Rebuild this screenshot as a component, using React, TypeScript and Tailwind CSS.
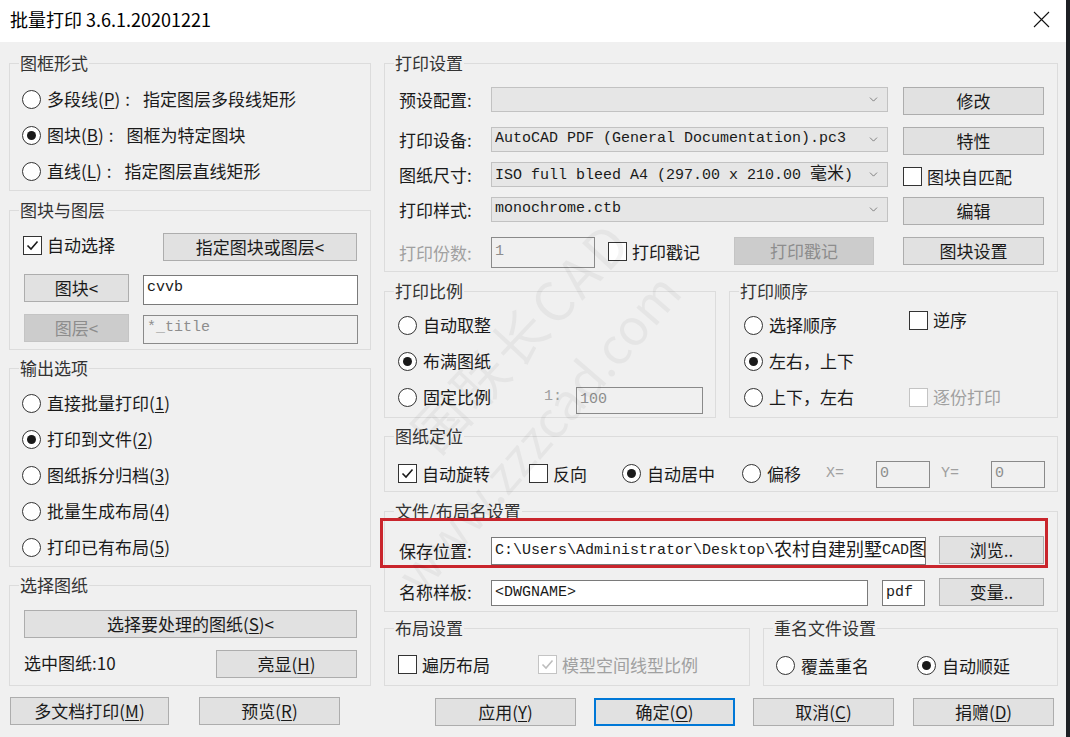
import React from "react"
import clsx from "clsx"
import { ChevronDown } from "lucide-react"

type Kids = { children?: React.ReactNode; className?: string }

const mono = "font-['Liberation_Mono','Noto_Sans_CJK_SC',monospace] text-[15px]"

const Group = ({ title, children, className }: Kids & { title: string }) => (
  <fieldset className={clsx("min-w-0 border border-[#dcdcdc]", className)}>
    <legend className="ml-[9px] px-[1px] text-[17px] leading-[24px] text-[#333]">
      {title}
    </legend>
    {children}
  </fieldset>
)

const Radio = ({
  checked = false,
  children,
  className,
}: Kids & { checked?: boolean }) => (
  <div className={clsx("flex items-center", className)}>
    <span className="flex h-[19px] w-[19px] shrink-0 items-center justify-center rounded-full border border-[#333] bg-white">
      {checked && <span className="h-[9px] w-[9px] rounded-full bg-[#1a1a1a]" />}
    </span>
    <span className="ml-[6px] whitespace-nowrap">{children}</span>
  </div>
)

const Check = ({
  checked = false,
  disabled = false,
  children,
  className,
}: Kids & { checked?: boolean; disabled?: boolean }) => (
  <div
    className={clsx(
      "flex items-center",
      disabled && "text-[#a0a0a0]",
      className
    )}
  >
    <span
      className={clsx(
        "flex h-[19px] w-[19px] shrink-0 items-center justify-center border bg-white",
        disabled ? "border-[#c4c4c4]" : "border-[#333]"
      )}
    >
      {checked && (
        <svg width="15" height="15" viewBox="0 0 15 15">
          <path
            d="M2.5 7.5 L6 11 L12.5 3.5"
            fill="none"
            stroke={disabled ? "#bdbdbd" : "#1a1a1a"}
            strokeWidth="1.6"
          />
        </svg>
      )}
    </span>
    <span className="ml-[5px] whitespace-nowrap">{children}</span>
  </div>
)

const Btn = ({
  children,
  className,
  disabled = false,
  primary = false,
}: Kids & { disabled?: boolean; primary?: boolean }) => (
  <div
    className={clsx(
      "flex h-[28px] shrink-0 items-center justify-center whitespace-nowrap",
      disabled
        ? "border border-[#c4c4c4] bg-[#cccccc] text-[#8d8d8d]"
        : primary
        ? "border-2 border-[#0078d7] bg-[#e1e1e1]"
        : "border border-[#adadad] bg-[#e1e1e1]",
      className
    )}
  >
    {children}
  </div>
)

const Combo = ({ children, className }: Kids) => (
  <div
    className={clsx(
      "flex h-[25px] w-[397px] shrink-0 items-center border border-[#c2c2c2] bg-[#e6e6e6] pl-[3px] pr-[7px]",
      className
    )}
  >
    <span className={clsx("flex-1 overflow-hidden whitespace-nowrap", mono)}>
      {children}
    </span>
    <ChevronDown size={13} strokeWidth={1.4} color="#606060" />
  </div>
)

const Field = ({
  children,
  className,
  gray = false,
}: Kids & { gray?: boolean }) => (
  <div
    className={clsx(
      "flex shrink-0 items-center overflow-hidden whitespace-nowrap border pl-[3px]",
      gray
        ? "border-[#8a8a8a] bg-[#f0f0f0] text-[#8d8d8d]"
        : "border-[#7a7a7a] bg-white",
      mono,
      className
    )}
  >
    {children}
  </div>
)

const Label = ({ children, className }: Kids) => (
  <div className={clsx("flex w-[92px] shrink-0 items-center", className)}>
    {children}
  </div>
)

// full-width style colon used in the frame-type radios
const Colon = () => <span className="ml-[5px] mr-[13px]">:</span>

const Watermark = () => (
  <div className="pointer-events-none absolute inset-0 overflow-hidden">
    <div className="absolute left-[420px] top-[400px] origin-left -rotate-[47deg] whitespace-nowrap text-[54px] tracking-[4px] text-[rgba(0,0,0,0.045)]">
      国联长CAD
    </div>
    <div className="absolute left-[405px] top-[545px] origin-left -rotate-[49deg] whitespace-nowrap text-[50px] text-[rgba(0,0,0,0.045)]">
      www.zzzcad.com
    </div>
  </div>
)

const LeftColumn = () => (
  <div className="flex w-[362px] shrink-0 flex-col pt-[9px]">
    <Group title="图框形式" className="h-[140px]">
      <div className="flex flex-col pl-[12px] pt-[6px]">
        <Radio className="h-[36px]">
          多段线(<u>P</u>)<Colon />指定图层多段线矩形
        </Radio>
        <Radio checked className="h-[36px]">
          图块(<u>B</u>)<Colon />图框为特定图块
        </Radio>
        <Radio className="h-[36px]">
          直线(<u>L</u>)<Colon />指定图层直线矩形
        </Radio>
      </div>
    </Group>

    <Group title="图块与图层" className="mt-[7px] h-[152px]">
      <div className="flex flex-col pl-[14px] pr-[13px] pt-[11px]">
        <div className="flex h-[28px] items-center justify-between">
          <Check checked className="-ml-[1px] -mt-[4px]">
            自动选择
          </Check>
          <Btn className="w-[194px]">指定图块或图层&lt;</Btn>
        </div>
        <div className="mt-[13px] flex items-start">
          <Btn className="h-[27px] w-[105px]">图块&lt;</Btn>
          <Field className="ml-[14px] mt-[1px] h-[30px] w-[215px] items-start pt-[1px]">
            cvvb
          </Field>
        </div>
        <div className="mt-[9px] flex items-start">
          <Btn disabled className="w-[105px]">
            图层&lt;
          </Btn>
          <Field gray className="ml-[14px] mt-[1px] h-[29px] w-[215px] items-start pt-[1px]">
            *_title
          </Field>
        </div>
      </div>
    </Group>

    <Group title="输出选项" className="mt-[6px] h-[211px]">
      <div className="flex flex-col pl-[12px] pt-[5px]">
        <Radio className="h-[36px]">
          直接批量打印(<u>1</u>)
        </Radio>
        <Radio checked className="h-[36px]">
          打印到文件(<u>2</u>)
        </Radio>
        <Radio className="h-[36px]">
          图纸拆分归档(<u>3</u>)
        </Radio>
        <Radio className="h-[36px]">
          批量生成布局(<u>4</u>)
        </Radio>
        <Radio className="h-[36px]">
          打印已有布局(<u>5</u>)
        </Radio>
      </div>
    </Group>

    <Group title="选择图纸" className="mt-[6px] h-[113px]">
      <div className="flex flex-col pl-[14px] pr-[13px] pt-[13px]">
        <Btn className="h-[27px] w-full">
          选择要处理的图纸(<u>S</u>)&lt;
        </Btn>
        <div className="mt-[12px] flex h-[28px] items-center justify-between">
          <span className="-mt-[2px]">选中图纸:10</span>
          <Btn className="w-[141px]">
            亮显(<u>H</u>)
          </Btn>
        </div>
      </div>
    </Group>

    <div className="mt-[11px] flex pl-[1px]">
      <Btn className="w-[159px]">
        多文档打印(<u>M</u>)
      </Btn>
      <Btn className="ml-[30px] w-[141px]">
        预览(<u>R</u>)
      </Btn>
    </div>
  </div>
)

const RightColumn = () => (
  <div className="ml-[13px] flex w-[674px] shrink-0 flex-col pt-[9px]">
    <Group title="打印设置" className="h-[221px]">
      <div className="flex flex-col pl-[14px] pt-[12px]">
        <div className="flex h-[28px] items-start">
          <Label className="h-[25px]">预设配置:</Label>
          <Combo />
          <Btn className="ml-[15px] w-[141px]">修改</Btn>
        </div>
        <div className="mt-[12px] flex h-[28px] items-start">
          <Label className="h-[25px]">打印设备:</Label>
          <Combo>AutoCAD PDF (General Documentation).pc3</Combo>
          <Btn className="ml-[15px] w-[141px]">特性</Btn>
        </div>
        <div className="mt-[7px] flex h-[28px] items-start">
          <Label className="h-[25px]">图纸尺寸:</Label>
          <Combo>
            ISO full bleed A4 (297.00 x 210.00 <span className="text-[17px]">毫米</span>)
          </Combo>
          <Check className="ml-[15px] mt-[2px]">图块自匹配</Check>
        </div>
        <div className="mt-[7px] flex h-[28px] items-start">
          <Label className="h-[25px]">打印样式:</Label>
          <Combo>monochrome.ctb</Combo>
          <Btn className="ml-[15px] w-[141px]">编辑</Btn>
        </div>
        <div className="mt-[12px] flex h-[31px] items-start">
          <Label className="h-[31px] text-[#a0a0a0]">打印份数:</Label>
          <Field gray className="h-[31px] w-[104px]">
            1
          </Field>
          <div className="ml-[13px] w-[126px] pt-[2px]">
            <Check>打印戳记</Check>
          </div>
          <Btn disabled className="w-[140px]">
            打印戳记
          </Btn>
          <Btn className="ml-[29px] w-[141px]">图块设置</Btn>
        </div>
      </div>
    </Group>

    <div className="mt-[7px] flex gap-[13px]">
      <Group title="打印比例" className="h-[139px] w-[333px]">
        <div className="flex flex-col pl-[13px] pt-[4px]">
          <Radio className="h-[36px]">自动取整</Radio>
          <Radio checked className="h-[36px]">
            布满图纸
          </Radio>
          <div className="flex h-[36px] items-center pr-[12px]">
            <Radio>固定比例</Radio>
            <span className={clsx("ml-auto text-[#a0a0a0]", mono)}>1:</span>
            <Field gray className="ml-[14px] mt-[6px] h-[27px] w-[127px]">
              100
            </Field>
          </div>
        </div>
      </Group>
      <Group title="打印顺序" className="h-[139px] w-[330px]">
        <div className="flex flex-col pl-[14px] pt-[4px]">
          <div className="flex h-[36px] items-center">
            <Radio className="w-[165px]">选择顺序</Radio>
            <Check className="-mt-[10px]">逆序</Check>
          </div>
          <div className="flex h-[36px] items-center">
            <Radio checked className="w-[165px]">
              左右，上下
            </Radio>
          </div>
          <div className="flex h-[36px] items-center">
            <Radio className="w-[165px]">上下，左右</Radio>
            <Check disabled>逐份打印</Check>
          </div>
        </div>
      </Group>
    </div>

    <Group title="图纸定位" className="mt-[6px] h-[68px]">
      <div className="flex items-start pl-[13px] pt-[13px]">
        <Check checked className="w-[131px]">
          自动旋转
        </Check>
        <Check className="w-[93px]">反向</Check>
        <Radio checked className="w-[120px]">
          自动居中
        </Radio>
        <Radio className="w-[84px]">偏移</Radio>
        <span className={clsx("flex h-[27px] w-[50px] items-center text-[#a0a0a0]", mono)}>
          X=
        </span>
        <Field gray className="h-[27px] w-[54px]">
          0
        </Field>
        <span className={clsx("ml-[11px] flex h-[27px] w-[50px] items-center text-[#a0a0a0]", mono)}>
          Y=
        </span>
        <Field gray className="h-[27px] w-[54px]">
          0
        </Field>
      </div>
    </Group>

    <Group title="文件/布局名设置" className="mt-[7px] h-[113px]">
      <div className="relative flex flex-col pl-[14px] pt-[13px]">
        <div className="absolute -left-[5px] -top-[5px] h-[50px] w-[668px] border-[3px] border-[#c9252c]" />
        <div className="flex items-start">
          <Label className="h-[30px]">保存位置:</Label>
          <Field className="mt-[1px] h-[28px] w-[435px]">
            C:\Users\Administrator
            <span className="inline-block h-[20px] w-px bg-black" />
            \Desktop\<span className="text-[18px]">农村自建别墅</span>CAD
            <span className="text-[18px]">图</span>
          </Field>
          <Btn className="ml-[13px] h-[27px] w-[105px]">浏览..</Btn>
        </div>
        <div className="mt-[12px] flex items-start">
          <Label className="h-[28px]">名称样板:</Label>
          <Field className="mt-[2px] h-[26px] w-[377px]">&lt;DWGNAME&gt;</Field>
          <Field className="ml-[14px] mt-[2px] h-[26px] w-[43px]">pdf</Field>
          <Btn className="ml-[14px] h-[27px] w-[105px]">变量..</Btn>
        </div>
      </div>
    </Group>

    <div className="mt-[4px] flex gap-[13px]">
      <Group title="布局设置" className="h-[70px] w-[366px]">
        <div className="flex items-center pl-[13px] pt-[12px]">
          <Check className="w-[140px]">遍历布局</Check>
          <Check checked disabled>
            模型空间线型比例
          </Check>
        </div>
      </Group>
      <Group title="重名文件设置" className="h-[70px] w-[295px]">
        <div className="flex items-center pl-[12px] pt-[13px]">
          <Radio className="w-[141px]">覆盖重名</Radio>
          <Radio checked>自动顺延</Radio>
        </div>
      </Group>
    </div>

    <div className="mt-[12px] flex pl-[51px]">
      <Btn className="w-[141px]">
        应用(<u>Y</u>)
      </Btn>
      <Btn primary className="ml-[18px] w-[141px]">
        确定(<u>O</u>)
      </Btn>
      <Btn className="ml-[18px] w-[141px]">
        取消(<u>C</u>)
      </Btn>
      <Btn className="ml-[19px] w-[141px]">
        捐赠(<u>D</u>)
      </Btn>
    </div>
  </div>
)

export default function App() {
  return (
    <div className="flex h-[737px] w-[1070px] overflow-hidden font-['Noto_Sans_CJK_SC',sans-serif] text-[17px] text-[#1a1a1a]">
      <div className="relative flex w-[1066px] shrink-0 flex-col bg-[#f0f0f0]">
        <div className="flex h-[42px] shrink-0 items-center justify-between bg-white pb-[4px] pl-[10px] pr-[16px]">
          <span className="text-[18px] text-black">批量打印 3.6.1.20201221</span>
          <svg width="17" height="17" viewBox="0 0 17 17">
            <path d="M1 1 L16 16 M16 1 L1 16" stroke="#111" strokeWidth="1.1" />
          </svg>
        </div>
        <div className="flex flex-1 pl-[9px] [&_u]:underline-offset-2">
          <LeftColumn />
          <RightColumn />
        </div>
        <Watermark />
      </div>
      <div className="flex-1 bg-[#1d2024]" />
    </div>
  )
}
